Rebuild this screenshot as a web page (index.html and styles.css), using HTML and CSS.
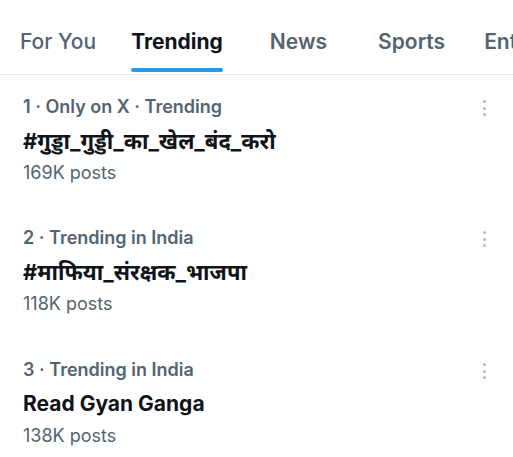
FILE: index.html
```html
<!DOCTYPE html>
<html lang="en">
<head>
<meta charset="utf-8">
<link rel="stylesheet" href="styles.css">
</head>
<body>
<nav class="tabs">
  <div class="tab">For You</div>
  <div class="tab active">Trending</div>
  <div class="tab">News</div>
  <div class="tab">Sports</div>
  <div class="tab">Entertainment</div>
</nav>
<main class="list">
  <div class="trend">
    <div class="info">
      <div class="meta">1 · Only on X · Trending</div>
      <div class="title hi" lang="hi">#गुड्डा_गुड्डी_का_खेल_बंद_करो</div>
      <div class="count">169K posts</div>
    </div>
    <div class="more"><span></span><span></span><span></span></div>
  </div>
  <div class="trend">
    <div class="info">
      <div class="meta">2 · Trending in India</div>
      <div class="title hi" lang="hi">#माफिया_संरक्षक_भाजपा</div>
      <div class="count">118K posts</div>
    </div>
    <div class="more"><span></span><span></span><span></span></div>
  </div>
  <div class="trend">
    <div class="info">
      <div class="meta">3 · Trending in India</div>
      <div class="title">Read Gyan Ganga</div>
      <div class="count">138K posts</div>
    </div>
    <div class="more"><span></span><span></span><span></span></div>
  </div>
</main>
</body>
</html>
```
FILE: styles.css
```css
* { box-sizing: border-box; }
html, body { margin: 0; padding: 0; background: #fff; }
body {
  width: 513px;
  height: 457px;
  overflow: hidden;
  font-family: Inter, "Noto Sans", "Noto Sans Devanagari", sans-serif;
  color: #0f1419;
}
.tabs {
  display: flex;
  padding-top: 28px;
  border-bottom: 1px solid #e6eaec;
  white-space: nowrap;
  overflow: hidden;
}
.tab {
  font-size: 21px;
  font-weight: 600;
  color: #536471;
  line-height: 28px;
  padding-bottom: 18px;
  position: relative;
  flex: none;
}
.tab:nth-child(1) { margin-left: 20px; margin-right: 35px; font-weight: 500; }
.tab:nth-child(2) { margin-right: 47px; }
.tab:nth-child(3) { margin-right: 51px; }
.tab:nth-child(4) { margin-right: 39px; }
.tab.active { color: #0f1419; font-weight: 700; }
.tab.active::after {
  content: "";
  position: absolute;
  left: 0; right: 0; bottom: 2px;
  height: 4px;
  border-radius: 2px;
  background: #1d9bf0;
}
.list { padding: 0 0 0 23px; }
.trend {
  display: flex;
  justify-content: space-between;
  height: 132px;
  padding-top: 19px;
}
.trend:first-child { padding-top: 20px; }
.meta {
  font-size: 18px;
  font-weight: 600;
  color: #536471;
  line-height: 24px;
}
.title {
  font-size: 21px;
  font-weight: 700;
  line-height: 28px;
  margin-top: 8px;
}
.title.hi { font-size: 22px; }
.count {
  font-size: 18px;
  color: #536471;
  line-height: 24px;
  margin-top: 6px;
}
.more {
  display: flex;
  flex-direction: column;
  gap: 3.5px;
  width: 3px;
  margin-right: 27px;
  margin-top: 5px;
}
.more span {
  width: 3px;
  height: 3px;
  border-radius: 50%;
  background: #b0b9bf;
}
```
